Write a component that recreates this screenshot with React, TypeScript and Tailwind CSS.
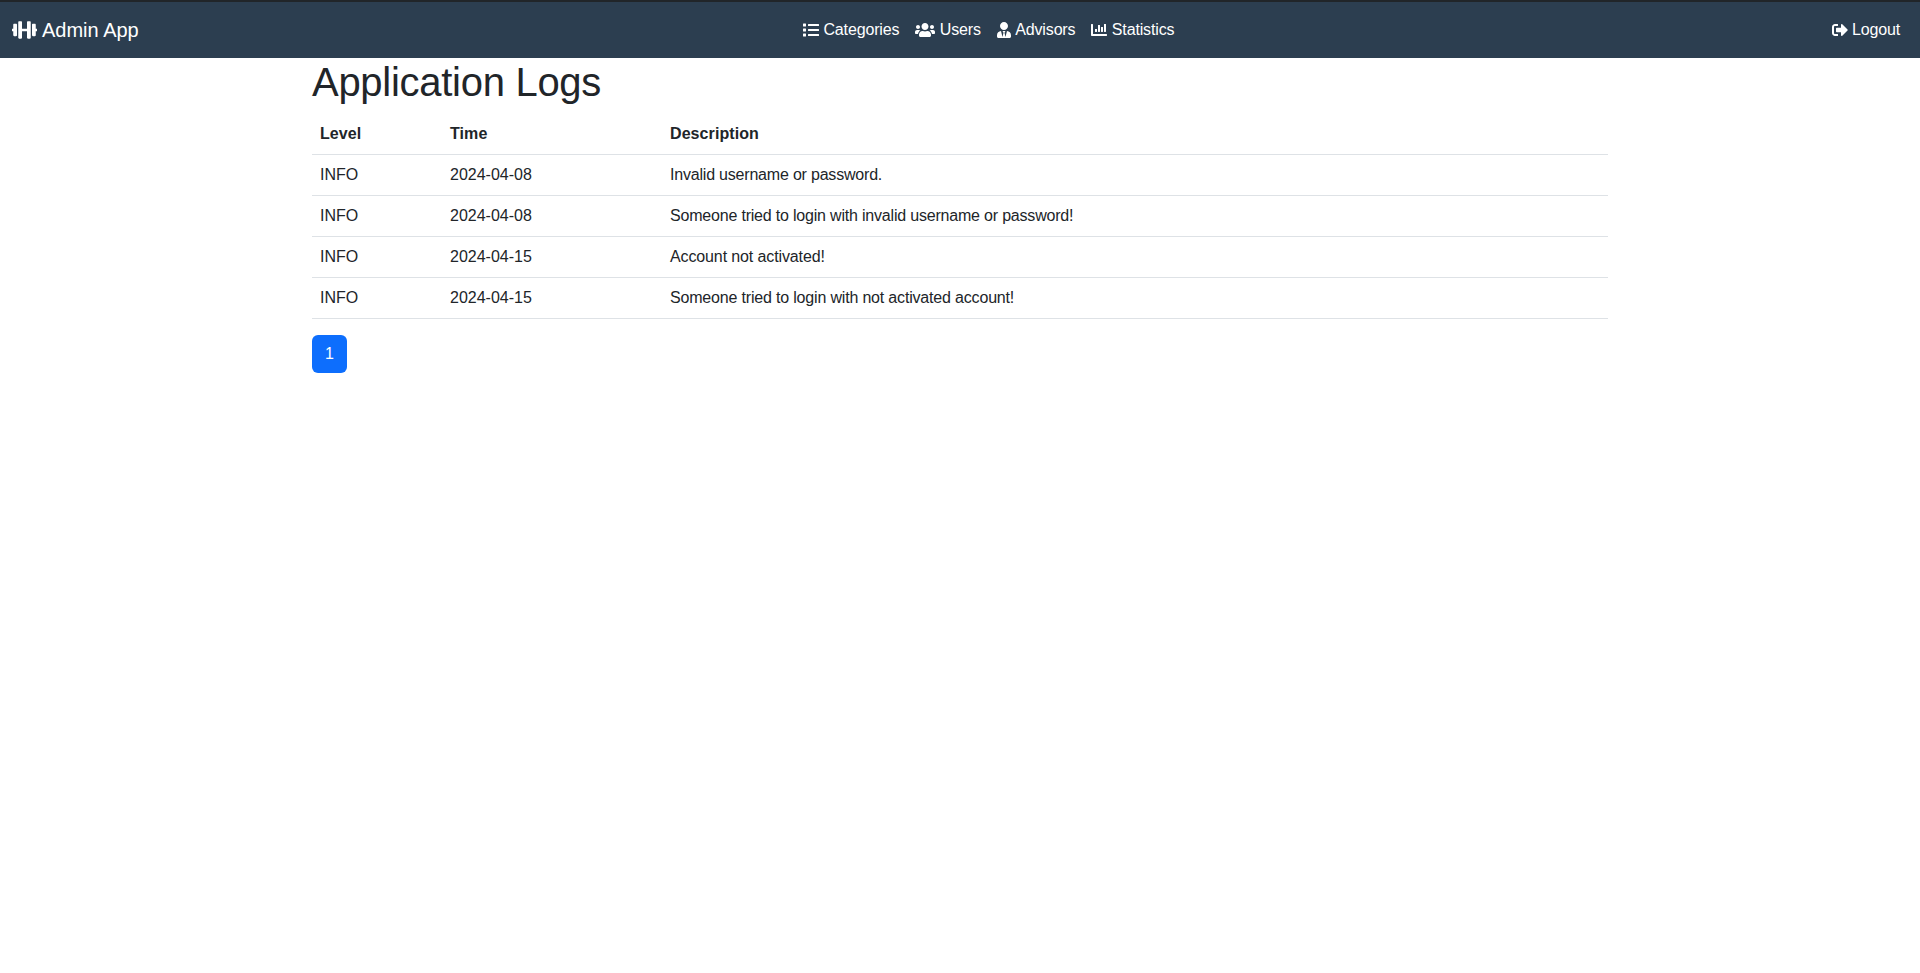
import type { ReactNode } from "react";
import { FaDumbbell, FaList, FaUsers, FaUserTie, FaChartBar, FaSignOutAlt } from "react-icons/fa";

const rows = [
  { level: "INFO", time: "2024-04-08", description: "Invalid username or password.", tracking: "tracking-[-0.2px]" },
  { level: "INFO", time: "2024-04-08", description: "Someone tried to login with invalid username or password!", tracking: "tracking-[-0.195px]" },
  { level: "INFO", time: "2024-04-15", description: "Account not activated!", tracking: "tracking-[-0.12px]" },
  { level: "INFO", time: "2024-04-15", description: "Someone tried to login with not activated account!", tracking: "tracking-[-0.18px]" },
];

function NavLink({ icon, children }: { icon: ReactNode; children: ReactNode }) {
  return (
    <a href="#" className="flex items-center gap-[4.45px] px-2 py-2 tracking-[-0.15px] whitespace-nowrap">
      {icon}
      <span>{children}</span>
    </a>
  );
}

export default function App() {
  return (
    <div className="min-h-screen bg-white font-['Liberation_Sans',Arial,sans-serif] text-base leading-6 text-[#212529]">
      <header className="flex h-[58px] items-center justify-between border-t-2 border-[#212529] bg-[#2c3e50] px-3 text-white">
        <a href="#" className="flex w-[783px] items-center gap-[5px] text-xl leading-[30px]">
          <FaDumbbell className="h-5 w-[25px]" />
          <span>Admin App</span>
        </a>
        <nav className="flex">
          <NavLink icon={<FaList className="h-4 w-4" />}>Categories</NavLink>
          <NavLink icon={<FaUsers className="h-4 w-5" />}>Users</NavLink>
          <NavLink icon={<FaUserTie className="h-4 w-[14px]" />}>Advisors</NavLink>
          <NavLink icon={<FaChartBar className="h-4 w-4" />}>Statistics</NavLink>
        </nav>
        <div className="flex flex-1 justify-end">
          <NavLink icon={<FaSignOutAlt className="h-4 w-4" />}>Logout</NavLink>
        </div>
      </header>
      <main className="mx-auto w-[1320px] px-3">
        <h1 className="mb-2 text-[40px] leading-[48px] font-medium tracking-[-0.28px]">Application Logs</h1>
        <table className="mb-4 w-full table-fixed border-collapse text-left">
          <colgroup>
            <col className="w-[130px]" />
            <col className="w-[220px]" />
            <col />
          </colgroup>
          <thead>
            <tr className="border-b border-[#dee2e6] tracking-[0.08px]">
              <th className="p-2">Level</th>
              <th className="p-2">Time</th>
              <th className="p-2">Description</th>
            </tr>
          </thead>
          <tbody>
            {rows.map((row) => (
              <tr key={row.description} className="border-b border-[#dee2e6]">
                <td className="p-2">{row.level}</td>
                <td className="p-2">{row.time}</td>
                <td className="p-2">
                  <span className={row.tracking}>{row.description}</span>
                </td>
              </tr>
            ))}
          </tbody>
        </table>
        <ul className="flex">
          <li>
            <a href="#" className="flex h-[38px] w-[35px] items-center justify-center rounded-md bg-[#0d6efd] text-white">1</a>
          </li>
        </ul>
      </main>
    </div>
  );
}
